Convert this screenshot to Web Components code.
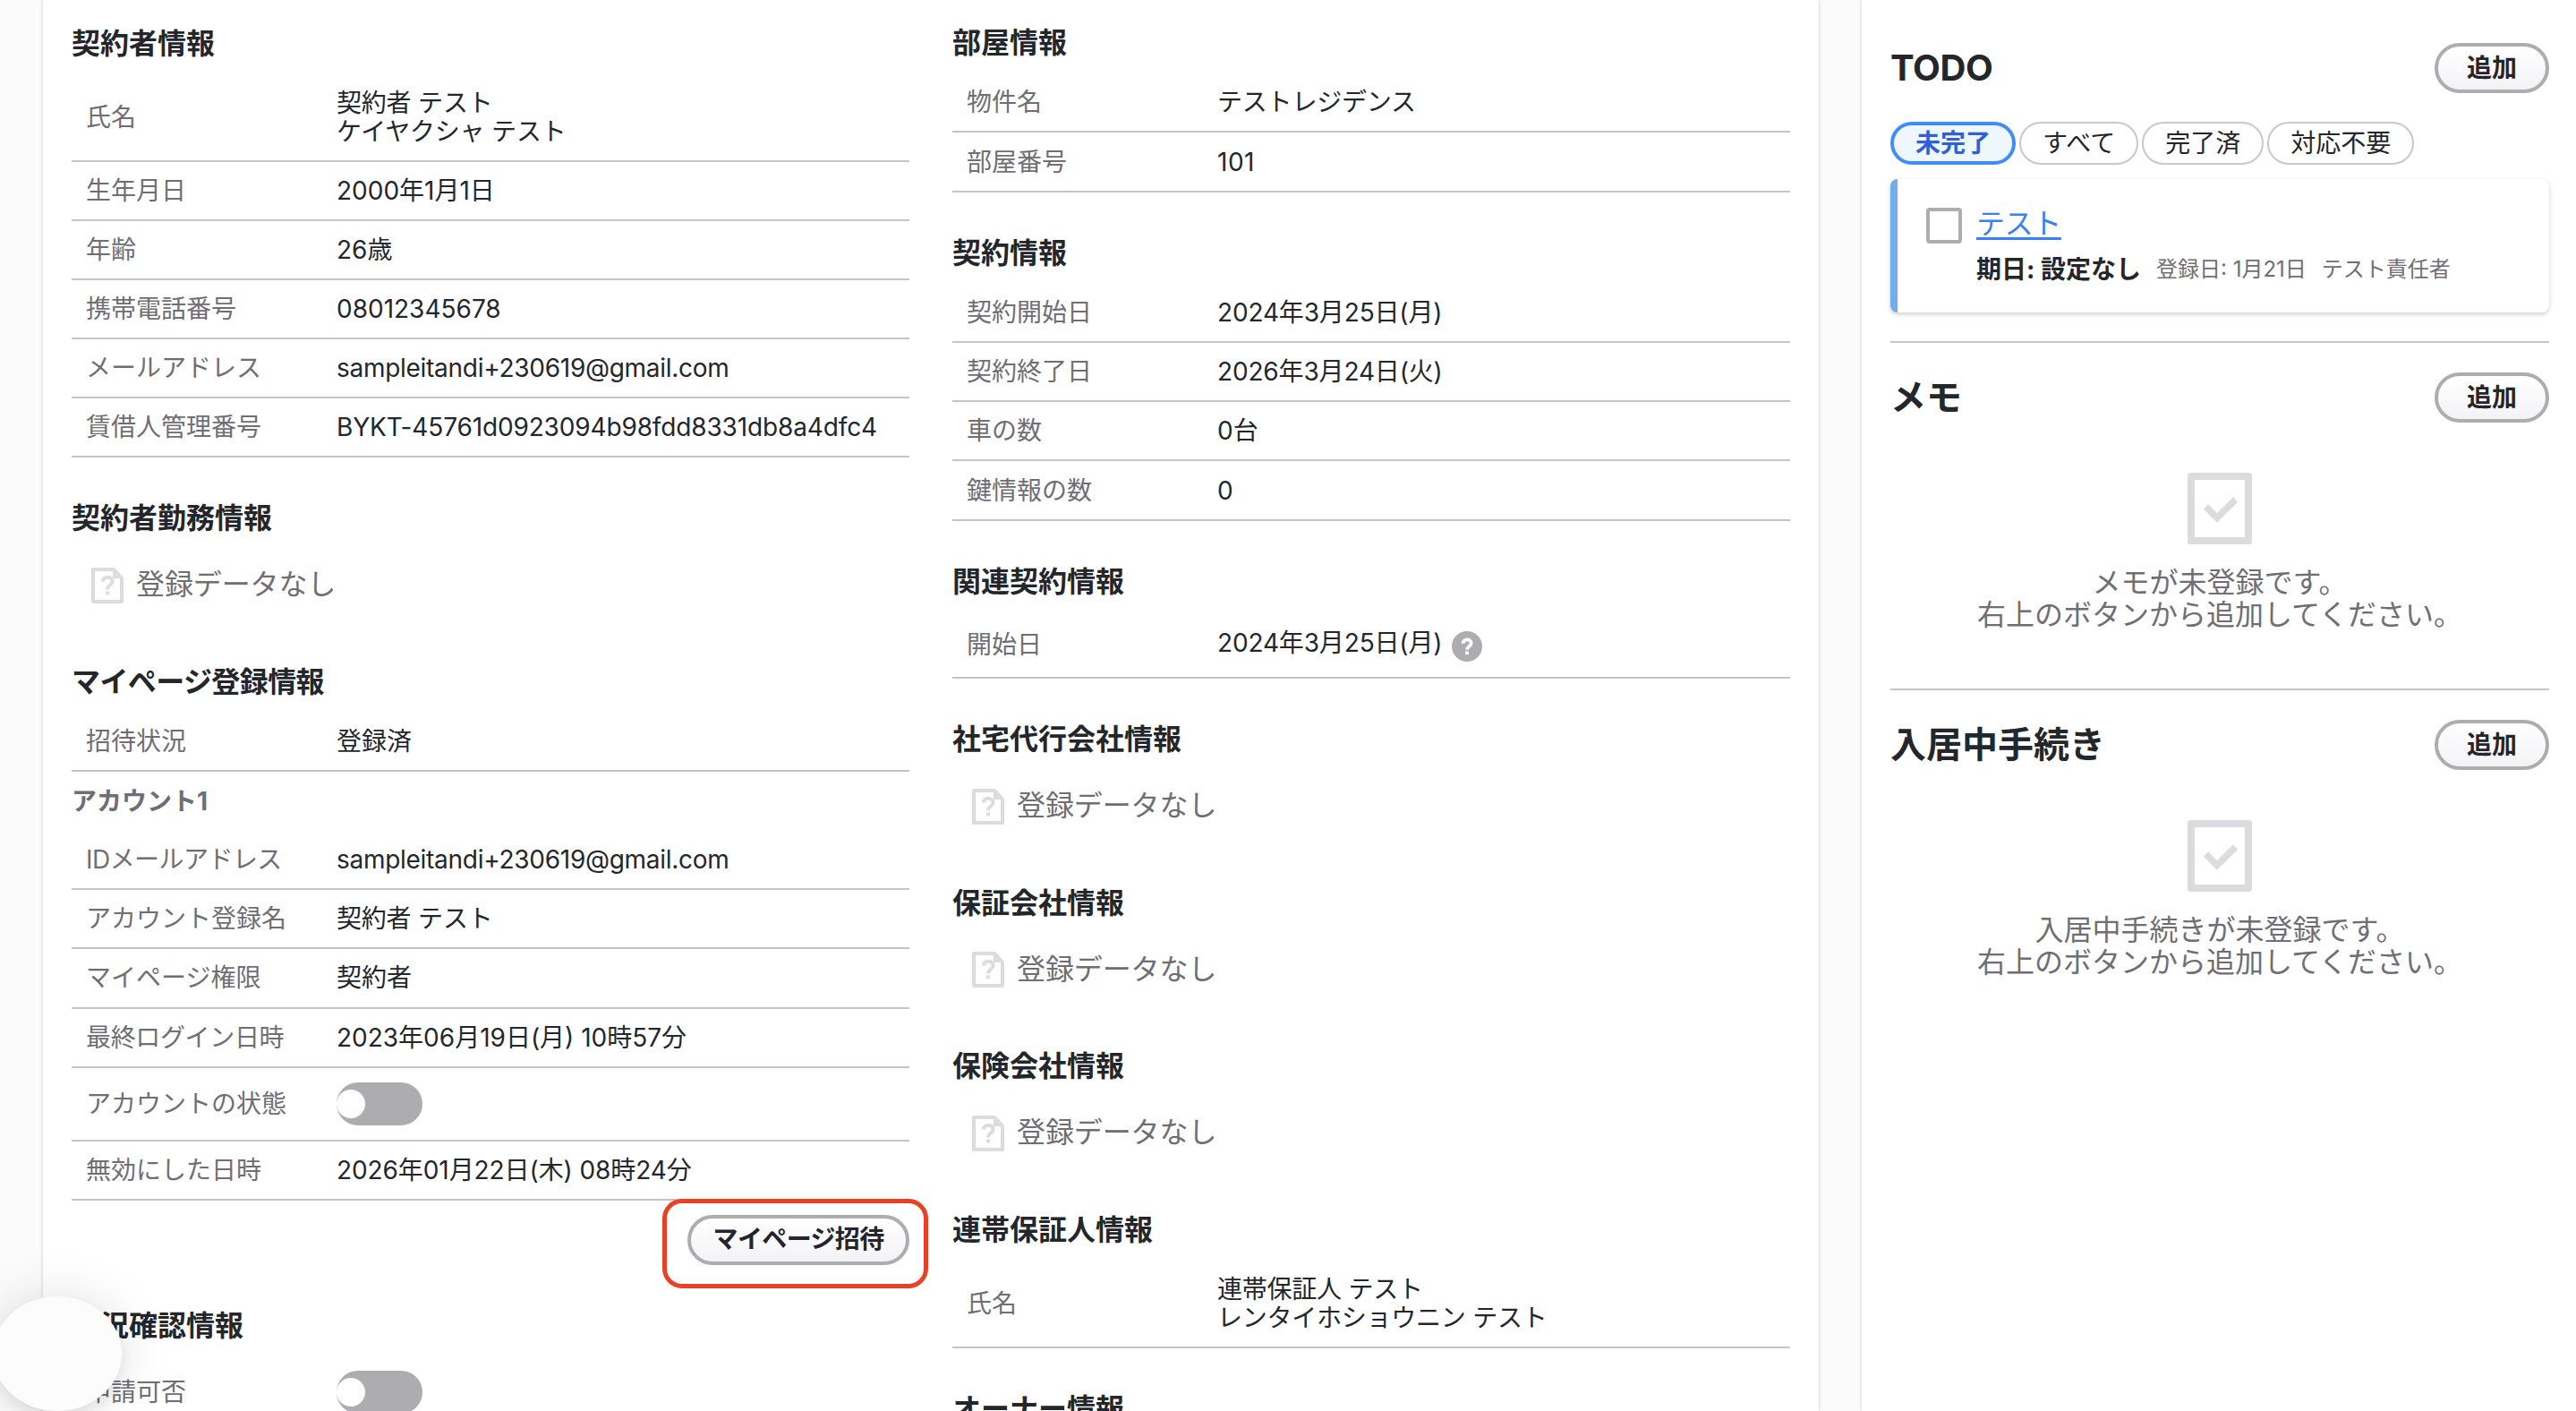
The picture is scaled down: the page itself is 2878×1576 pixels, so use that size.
<!DOCTYPE html>
<html lang="ja">
<head>
<meta charset="utf-8">
<title>契約者情報</title>
<style>
  html, body {
    margin: 0;
    height: 1576px;
    overflow: hidden;
  }
  body {
    background: #fbfbfc;
    color: #23272c;
    font-family: Inter, "Noto Sans CJK JP", sans-serif;
    font-size: 28px;
    line-height: 32px;
  }
</style>
</head>
<body>

<pagina-contrato>
  <panel-info>
    <columna-info style="padding-top: 13px">
      <seccion-info titulo="契約者情報">
        <fila-dato etiqueta="氏名" alto="98" style="--valor: -.2px">契約者 テスト<br>ケイヤクシャ テスト</fila-dato>
        <fila-dato etiqueta="生年月日">2000年1月1日</fila-dato>
        <fila-dato etiqueta="年齢">26歳</fila-dato>
        <fila-dato etiqueta="携帯電話番号">08012345678</fila-dato>
        <fila-dato etiqueta="メールアドレス" style="--valor: -.28px">sampleitandi+230619@gmail.com</fila-dato>
        <fila-dato etiqueta="賃借人管理番号" style="--valor: -.14px">BYKT-45761d0923094b98fdd8331db8a4dfc4</fila-dato>
      </seccion-info>
      <seccion-info titulo="契約者勤務情報">
        <sin-datos></sin-datos>
      </seccion-info>
      <seccion-info titulo="マイページ登録情報" style="--titulo: -.6px">
        <fila-dato etiqueta="招待状況">登録済</fila-dato>
        <sub-titulo>アカウント1</sub-titulo>
        <fila-dato etiqueta="IDメールアドレス" style="--etiqueta: -.55px; --valor: -.28px">sampleitandi+230619@gmail.com</fila-dato>
        <fila-dato etiqueta="アカウント登録名" style="--valor: -.2px">契約者 テスト</fila-dato>
        <fila-dato etiqueta="マイページ権限" alto="67">契約者</fila-dato>
        <fila-dato etiqueta="最終ログイン日時" style="--etiqueta: -.35px">2023年06月19日(月) 10時57分</fila-dato>
        <fila-dato etiqueta="アカウントの状態" alto="82"><boton-switch></boton-switch></fila-dato>
        <fila-dato etiqueta="無効にした日時" style="--valor: -.08px">2026年01月22日(木) 08時24分</fila-dato>
        <zona-invitar><boton-redondo style="--boton: -.65px; --lado: 24.500px">マイページ招待</boton-redondo></zona-invitar>
      </seccion-info>
      <seccion-info titulo="状況確認情報">
        <fila-dato etiqueta="申請可否" alto="82"><boton-switch></boton-switch></fila-dato>
      </seccion-info>
    </columna-info>

    <columna-info style="padding-top: 12px">
      <seccion-info titulo="部屋情報">
        <fila-dato etiqueta="物件名" style="--valor: -.2px">テストレジデンス</fila-dato>
        <fila-dato etiqueta="部屋番号" alto="67" style="--valor: .5px">101</fila-dato>
      </seccion-info>
      <seccion-info titulo="契約情報">
        <fila-dato etiqueta="契約開始日" style="--valor: -.15px">2024年3月25日(月)</fila-dato>
        <fila-dato etiqueta="契約終了日" style="--valor: -.15px">2026年3月24日(火)</fila-dato>
        <fila-dato etiqueta="車の数">0台</fila-dato>
        <fila-dato etiqueta="鍵情報の数" alto="67">0</fila-dato>
      </seccion-info>
      <seccion-info titulo="関連契約情報">
        <fila-dato etiqueta="開始日" alto="74" style="--valor: -.15px">2024年3月25日(月)<icono-ayuda></icono-ayuda></fila-dato>
      </seccion-info>
      <seccion-info titulo="社宅代行会社情報">
        <sin-datos></sin-datos>
      </seccion-info>
      <seccion-info titulo="保証会社情報">
        <sin-datos></sin-datos>
      </seccion-info>
      <seccion-info titulo="保険会社情報">
        <sin-datos></sin-datos>
      </seccion-info>
      <seccion-info titulo="連帯保証人情報">
        <fila-dato etiqueta="氏名" alto="98" style="--valor: -.25px">連帯保証人 テスト<br>レンタイホショウニン テスト</fila-dato>
      </seccion-info>
      <seccion-info titulo="オーナー情報"></seccion-info>
    </columna-info>
  </panel-info>

  <panel-lateral slot="lateral">
    <bloque-lateral titulo="TODO" style="--titulo: -.4px">
      <filtros-todo></filtros-todo>
      <tarjeta-todo>テスト</tarjeta-todo>
    </bloque-lateral>
    <bloque-lateral titulo="メモ">
      <lista-vacia>メモが未登録です。<br>右上のボタンから追加してください。</lista-vacia>
    </bloque-lateral>
    <bloque-lateral titulo="入居中手続き" ultimo>
      <lista-vacia>入居中手続きが未登録です。<br>右上のボタンから追加してください。</lista-vacia>
    </bloque-lateral>
  </panel-lateral>
</pagina-contrato>

<script>
// Base: cada componente solo define su html()
class Componente extends HTMLElement {
  constructor() {
    super();
    this.attachShadow({ mode: 'open' });
  }
  connectedCallback() {
    this.shadowRoot.innerHTML = this.html();
  }
}

class PaginaContrato extends Componente {
  html() {
    return `
    <style>
      :host {
        display: flex;
        gap: 48px;
        height: 1576px;
        padding-left: 48px;
        box-sizing: border-box;
        position: relative;
        overflow: hidden;
      }
      /* boton flotante sobre la esquina */
      .flotante {
        position: absolute;
        left: -8px;
        top: 1448px;
        width: 144px;
        height: 128px;
        border-radius: 50%;
        background: #fcfcfc;
        box-shadow: 0 8px 16px rgba(0, 0, 0, .07), 0 0 60px rgba(0, 0, 0, .12);
      }
    </style>
    <slot></slot>
    <slot name="lateral"></slot>
    <div class="flotante"></div>`;
  }
}
customElements.define('pagina-contrato', PaginaContrato);

class PanelInfo extends Componente {
  html() {
    return `
    <style>
      :host {
        display: flex;
        gap: 48px;
        width: 1984px;
        flex: none;
        padding: 0 32px;
        box-sizing: border-box;
        background: #fff;
        box-shadow: 0 0 4px rgba(0, 0, 0, .2);
      }
    </style>
    <slot></slot>`;
  }
}
customElements.define('panel-info', PanelInfo);

class ColumnaInfo extends Componente {
  html() {
    return `
    <style>
      :host {
        display: flex;
        flex-direction: column;
        gap: 32px;
        width: 936px;
        flex: none;
      }
    </style>
    <slot></slot>`;
  }
}
customElements.define('columna-info', ColumnaInfo);

class SeccionInfo extends Componente {
  html() {
    return `
    <style>
      :host { display: block; }
      h2 {
        margin: 0;
        height: 70px;
        line-height: 71px;
        font-size: 32px;
        font-weight: 700;
        letter-spacing: var(--titulo, 0);
      }
    </style>
    <h2>${this.getAttribute('titulo')}</h2>
    <slot></slot>`;
  }
}
customElements.define('seccion-info', SeccionInfo);

class FilaDato extends Componente {
  html() {
    return `
    <style>
      :host {
        display: flex;
        align-items: center;
        height: ${this.getAttribute('alto') || 66}px;
        box-sizing: border-box;
        border-bottom: 2px solid #c4c4c9;
        padding-left: 16px;
      }
      .etiqueta {
        width: 280px;
        flex: none;
        color: #6f6e75;
        letter-spacing: var(--etiqueta, 0);
        white-space: nowrap;
      }
      .valor {
        letter-spacing: var(--valor, 0);
        white-space: nowrap;
      }
    </style>
    <div class="etiqueta">${this.getAttribute('etiqueta')}</div>
    <div class="valor"><slot></slot></div>`;
  }
}
customElements.define('fila-dato', FilaDato);

class SubTitulo extends Componente {
  html() {
    return `
    <style>
      :host {
        display: block;
        height: 66px;
        line-height: 66px;
        font-weight: 700;
        color: #6f6e75;
      }
    </style>
    <slot></slot>`;
  }
}
customElements.define('sub-titulo', SubTitulo);

class SinDatos extends Componente {
  html() {
    return `
    <style>
      :host {
        display: flex;
        align-items: center;
        gap: 14px;
        height: 80.5px;
        padding-left: 22px;
        font-size: 32px;
        color: #6f6e75;
      }
      svg { padding-top: 1px; }
      span { letter-spacing: -.1px; }
    </style>
    <svg width="36" height="40" viewBox="0 0 36 40">
      <path d="M2 0H26L36 11V38a2 2 0 0 1-2 2H2a2 2 0 0 1-2-2V2a2 2 0 0 1 2-2zM4 4V36H32V12H24V4z" fill="#dcdcde" fill-rule="evenodd"/>
      <path d="M13 15.500C13 9 23.500 9 23.500 15.500C23.500 19.500 18 19.500 18 24.500" fill="none" stroke="#dcdcde" stroke-width="4"/>
      <rect x="16" y="26.500" width="4" height="3.800" fill="#dcdcde"/>
    </svg>
    <span>登録データなし</span>`;
  }
}
customElements.define('sin-datos', SinDatos);

class BotonSwitch extends Componente {
  html() {
    return `
    <style>
      :host {
        display: flex;
        align-items: center;
        width: 96px;
        height: 48px;
        border-radius: 24px;
        background: #adacb1;
      }
      i {
        width: 32px;
        height: 32px;
        border-radius: 50%;
        background: #fff;
      }
    </style>
    <i></i>`;
  }
}
customElements.define('boton-switch', BotonSwitch);

class IconoAyuda extends Componente {
  html() {
    return `
    <style>
      :host {
        display: inline-block;
        height: 34px;
        margin-left: 11px;
        vertical-align: -11px;
      }
      svg { display: block; }
    </style>
    <svg width="34" height="34" viewBox="0 0 34 34">
      <circle cx="17" cy="17" r="17" fill="#adacb1"/>
      <path d="M12.500 13.800C12.500 8 21.700 8 21.700 13.500C21.700 17 17 16.800 17 20.800" fill="none" stroke="#fff" stroke-width="3.800"/>
      <rect x="15" y="22.500" width="4" height="3.600" fill="#fff"/>
    </svg>`;
  }
}
customElements.define('icono-ayuda', IconoAyuda);

class BotonRedondo extends Componente {
  html() {
    return `
    <style>
      :host { display: block; }
      button {
        display: block;
        height: 56px;
        padding: 0 var(--lado, 26px) 1px;
        box-sizing: border-box;
        border: 4px solid #adacb1;
        border-radius: 28px;
        background: linear-gradient(#fff, #f3f3f6);
        color: #25242d;
        font: 700 28px/46px Inter, "Noto Sans CJK JP", sans-serif;
        letter-spacing: var(--boton, 0);
        white-space: nowrap;
      }
    </style>
    <button><slot></slot></button>`;
  }
}
customElements.define('boton-redondo', BotonRedondo);

class ZonaInvitar extends Componente {
  html() {
    return `
    <style>
      :host {
        display: flex;
        justify-content: flex-end;
        padding-top: 16px;
        position: relative;
      }
      /* marco rojo que resalta el boton */
      .marco {
        position: absolute;
        right: -21px;
        top: -2px;
        width: 297px;
        height: 100px;
        box-sizing: border-box;
        border: 5px solid #ea4026;
        border-radius: 22px;
      }
    </style>
    <slot></slot>
    <div class="marco"></div>`;
  }
}
customElements.define('zona-invitar', ZonaInvitar);

class PanelLateral extends Componente {
  html() {
    return `
    <style>
      :host {
        display: flex;
        flex-direction: column;
        gap: 33px;
        width: 798px;
        flex: none;
        padding: 48px 30px 0 32px;
        box-sizing: border-box;
        background: #fff;
        box-shadow: 0 0 4px rgba(0, 0, 0, .2);
      }
    </style>
    <slot></slot>`;
  }
}
customElements.define('panel-lateral', PanelLateral);

class BloqueLateral extends Componente {
  html() {
    return `
    <style>
      :host {
        display: block;
        border-bottom: 2px solid #c6c6c8;
      }
      :host([ultimo]) { border: 0; }
      header {
        display: flex;
        justify-content: space-between;
        height: 56px;
      }
      h1 {
        margin: 0;
        font-size: 40px;
        line-height: 56px;
        font-weight: 700;
        letter-spacing: var(--titulo, 0);
      }
    </style>
    <header>
      <h1>${this.getAttribute('titulo')}</h1>
      <boton-redondo style="width: 128px; display: grid">追加</boton-redondo>
    </header>
    <slot></slot>`;
  }
}
customElements.define('bloque-lateral', BloqueLateral);

class FiltrosTodo extends Componente {
  html() {
    return `
    <style>
      :host {
        display: flex;
        gap: 4px;
        padding: 32px 0 16px;
      }
      span {
        height: 48px;
        padding: 0 24px;
        box-sizing: border-box;
        border: 2px solid #c8c8cb;
        border-radius: 24px;
        line-height: 44px;
      }
      .activo {
        border: 4px solid #3f8cfa;
        background: #eef6fe;
        color: #2e62d4;
        font-weight: 700;
        line-height: 40px;
      }
    </style>
    <span class="activo">未完了</span>
    <span style="letter-spacing: .1px">すべて</span>
    <span>完了済</span>
    <span>対応不要</span>`;
  }
}
customElements.define('filtros-todo', FiltrosTodo);

class TarjetaTodo extends Componente {
  html() {
    return `
    <style>
      :host {
        display: flex;
        gap: 16px;
        height: 149px;
        margin-bottom: 32px;
        padding: 32px 0 0 32px;
        box-sizing: border-box;
        border-left: 8px solid #73adea;
        border-radius: 8px;
        background: #fff;
        box-shadow: 0 2px 5px rgba(0, 0, 0, .2);
      }
      .check {
        width: 40px;
        height: 40px;
        box-sizing: border-box;
        border: 4px solid #adacb1;
        border-radius: 4px;
      }
      a {
        display: block;
        font-size: 32px;
        line-height: 36px;
        letter-spacing: -.4px;
        color: #3880f6;
        text-decoration: underline;
        text-decoration-thickness: 3px;
        text-underline-offset: 4px;
      }
      .detalle {
        display: flex;
        align-items: center;
        gap: 17px;
        height: 32px;
        margin-top: 17px;
        font-size: 24px;
        color: #6f6e75;
        white-space: nowrap;
      }
      b {
        font-size: 28px;
        color: #23272c;
      }
    </style>
    <div class="check"></div>
    <div>
      <a><slot></slot></a>
      <div class="detalle">
        <b>期日: 設定なし</b>
        <span>登録日: 1月21日</span>
        <span>テスト責任者</span>
      </div>
    </div>`;
  }
}
customElements.define('tarjeta-todo', TarjetaTodo);

class ListaVacia extends Componente {
  html() {
    return `
    <style>
      :host {
        display: flex;
        flex-direction: column;
        align-items: center;
        gap: 25px;
        padding: 56px 0 64px;
        font-size: 32px;
        line-height: 36px;
        text-align: center;
        color: #6f6e75;
      }
    </style>
    <svg width="72" height="80" viewBox="0 0 72 80">
      <path d="M3 0H69a3 3 0 0 1 3 3V77a3 3 0 0 1-3 3H3a3 3 0 0 1-3-3V3a3 3 0 0 1 3-3zM8 8V72H64V8z" fill="#dcdcde" fill-rule="evenodd"/>
      <path d="M20.500 38L33 50.500L53.500 30" fill="none" stroke="#dcdcde" stroke-width="7.500"/>
    </svg>
    <div><slot></slot></div>`;
  }
}
customElements.define('lista-vacia', ListaVacia);
</script>
</body>
</html>
